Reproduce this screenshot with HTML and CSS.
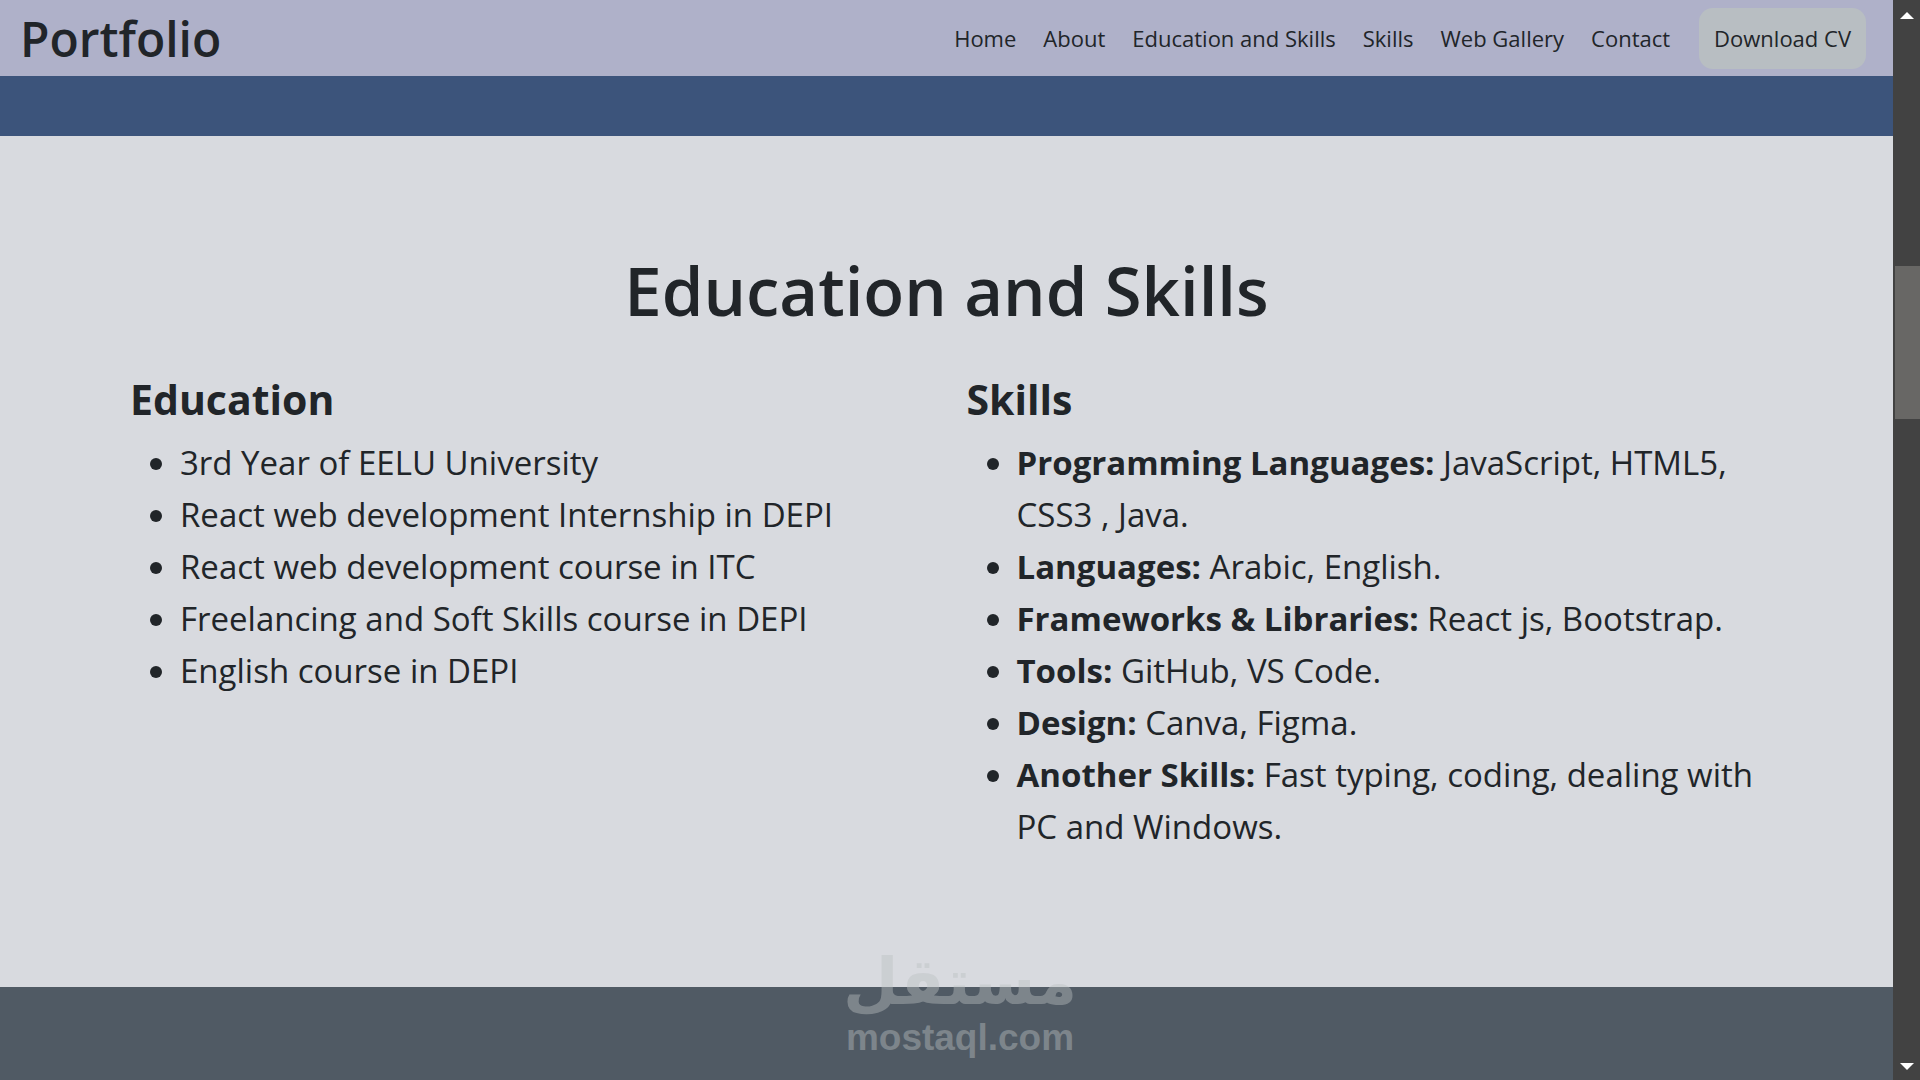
FILE: index.html
```html
<!DOCTYPE html>
<html lang="en">
<head>
  <meta charset="UTF-8">
  <meta name="viewport" content="width=device-width, initial-scale=1.0">
  <title>Portfolio</title>
  <link rel="stylesheet" href="styles.css">
</head>
<body>
  <div class="page">
    <nav class="navbar">
      <a class="brand" href="#">Portfolio</a>
      <ul class="nav-links">
        <li><a href="#home">Home</a></li>
        <li><a href="#about">About</a></li>
        <li><a href="#education">Education and Skills</a></li>
        <li><a href="#skills">Skills</a></li>
        <li><a href="#gallery">Web Gallery</a></li>
        <li><a href="#contact">Contact</a></li>
      </ul>
      <button type="button" class="cv-button">Download CV</button>
    </nav>

    <div class="about-end"></div>

    <section class="education" id="education">
      <h2>Education and Skills</h2>
      <div class="row">
        <div class="col">
          <h3>Education</h3>
          <ul>
            <li>3rd Year of EELU University</li>
            <li>React web development Internship in DEPI</li>
            <li>React web development course in ITC</li>
            <li>Freelancing and Soft Skills course in DEPI</li>
            <li>English course in DEPI</li>
          </ul>
        </div>
        <div class="col">
          <h3>Skills</h3>
          <ul>
            <li><strong>Programming Languages:</strong> JavaScript, HTML5, CSS3 , Java.</li>
            <li><strong>Languages:</strong> Arabic, English.</li>
            <li><strong>Frameworks &amp; Libraries:</strong> React js, Bootstrap.</li>
            <li><strong>Tools:</strong> GitHub, VS Code.</li>
            <li><strong>Design:</strong> Canva, Figma.</li>
            <li><strong>Another Skills:</strong> Fast typing, coding, dealing with PC and Windows.</li>
          </ul>
        </div>
      </div>
    </section>

    <section class="skills" id="skills"></section>
  </div>

  <div class="scrollbar">
    <svg class="arrow" viewBox="0 0 14 7"><path d="M0 7L7 0L14 7Z"/></svg>
    <div class="track"><div class="thumb"></div></div>
    <svg class="arrow" viewBox="0 0 14 7"><path d="M0 0L7 7L14 0Z"/></svg>
  </div>

  <div class="watermark">
    <span class="watermark-ar" lang="ar" dir="rtl">مستقل</span>
    <span class="watermark-en">mostaql.com</span>
  </div>
</body>
</html>
```
FILE: styles.css
```css
* {
  margin: 0;
  padding: 0;
  box-sizing: border-box;
}

body {
  font-family: 'Segoe UI', 'Open Sans', sans-serif;
  color: #212529;
  display: flex;
  height: 100vh;
  overflow: hidden;
  position: relative;
}

.page {
  flex: 1;
  display: flex;
  flex-direction: column;
}

/* Navbar */
.navbar {
  display: flex;
  align-items: center;
  background-color: #afb1c9;
  padding: 8px 27px 7px 20px;
}

.brand {
  font-size: 48px;
  font-weight: 600;
  line-height: 61px;
  color: #212529;
  text-decoration: none;
  margin-right: auto;
}

.nav-links {
  display: flex;
  gap: 27px;
  list-style: none;
  font-size: 22px;
  line-height: 37px;
  margin-right: 29px;
}

.nav-links a {
  color: #212529;
  text-decoration: none;
}

.cv-button {
  font-family: inherit;
  font-size: 22px;
  line-height: 37px;
  color: #212529;
  background-color: #b8bec2;
  border: none;
  border-radius: 14px;
  padding: 12px 15px;
  cursor: pointer;
}

.about-end {
  height: 60px;
  background-color: #3c547b;
}

/* Education and Skills */
.education {
  background-color: #d8dadf;
  padding: 111px 110px 134px;
}

.education h2 {
  font-size: 67px;
  font-weight: 600;
  line-height: 86px;
  text-align: center;
  margin-bottom: 40px;
}

.row {
  display: flex;
}

.col {
  flex: 1;
  padding: 0 20px;
}

.col h3 {
  font-size: 41px;
  font-weight: 700;
  line-height: 52px;
  margin-bottom: 12px;
}

.col ul {
  font-size: 33px;
  line-height: 52px;
  padding-left: 50px;
}

.skills {
  flex: 1;
  background-color: #505a64;
}

/* Scrollbar */
.scrollbar {
  width: 27px;
  background-color: #424242;
  display: flex;
  flex-direction: column;
  align-items: center;
  padding: 12px 0 10px;
}

.arrow {
  width: 14px;
  height: 7px;
  fill: #fff;
}

.track {
  flex: 1;
  width: 100%;
  padding: 247px 0 0 2px;
}

.thumb {
  height: 153px;
  background-color: #686765;
}

/* Watermark */
.watermark {
  position: absolute;
  left: 0;
  right: 0;
  bottom: 20px;
  display: flex;
  flex-direction: column;
  align-items: center;
  color: #bbc0c2;
  opacity: 0.42;
  font-weight: 700;
  pointer-events: none;
}

.watermark-ar {
  font-family: 'DejaVu Sans', sans-serif;
  font-size: 64px;
  line-height: 68px;
}

.watermark-en {
  font-family: 'Liberation Sans', sans-serif;
  font-size: 37px;
  line-height: 44px;
}
```
